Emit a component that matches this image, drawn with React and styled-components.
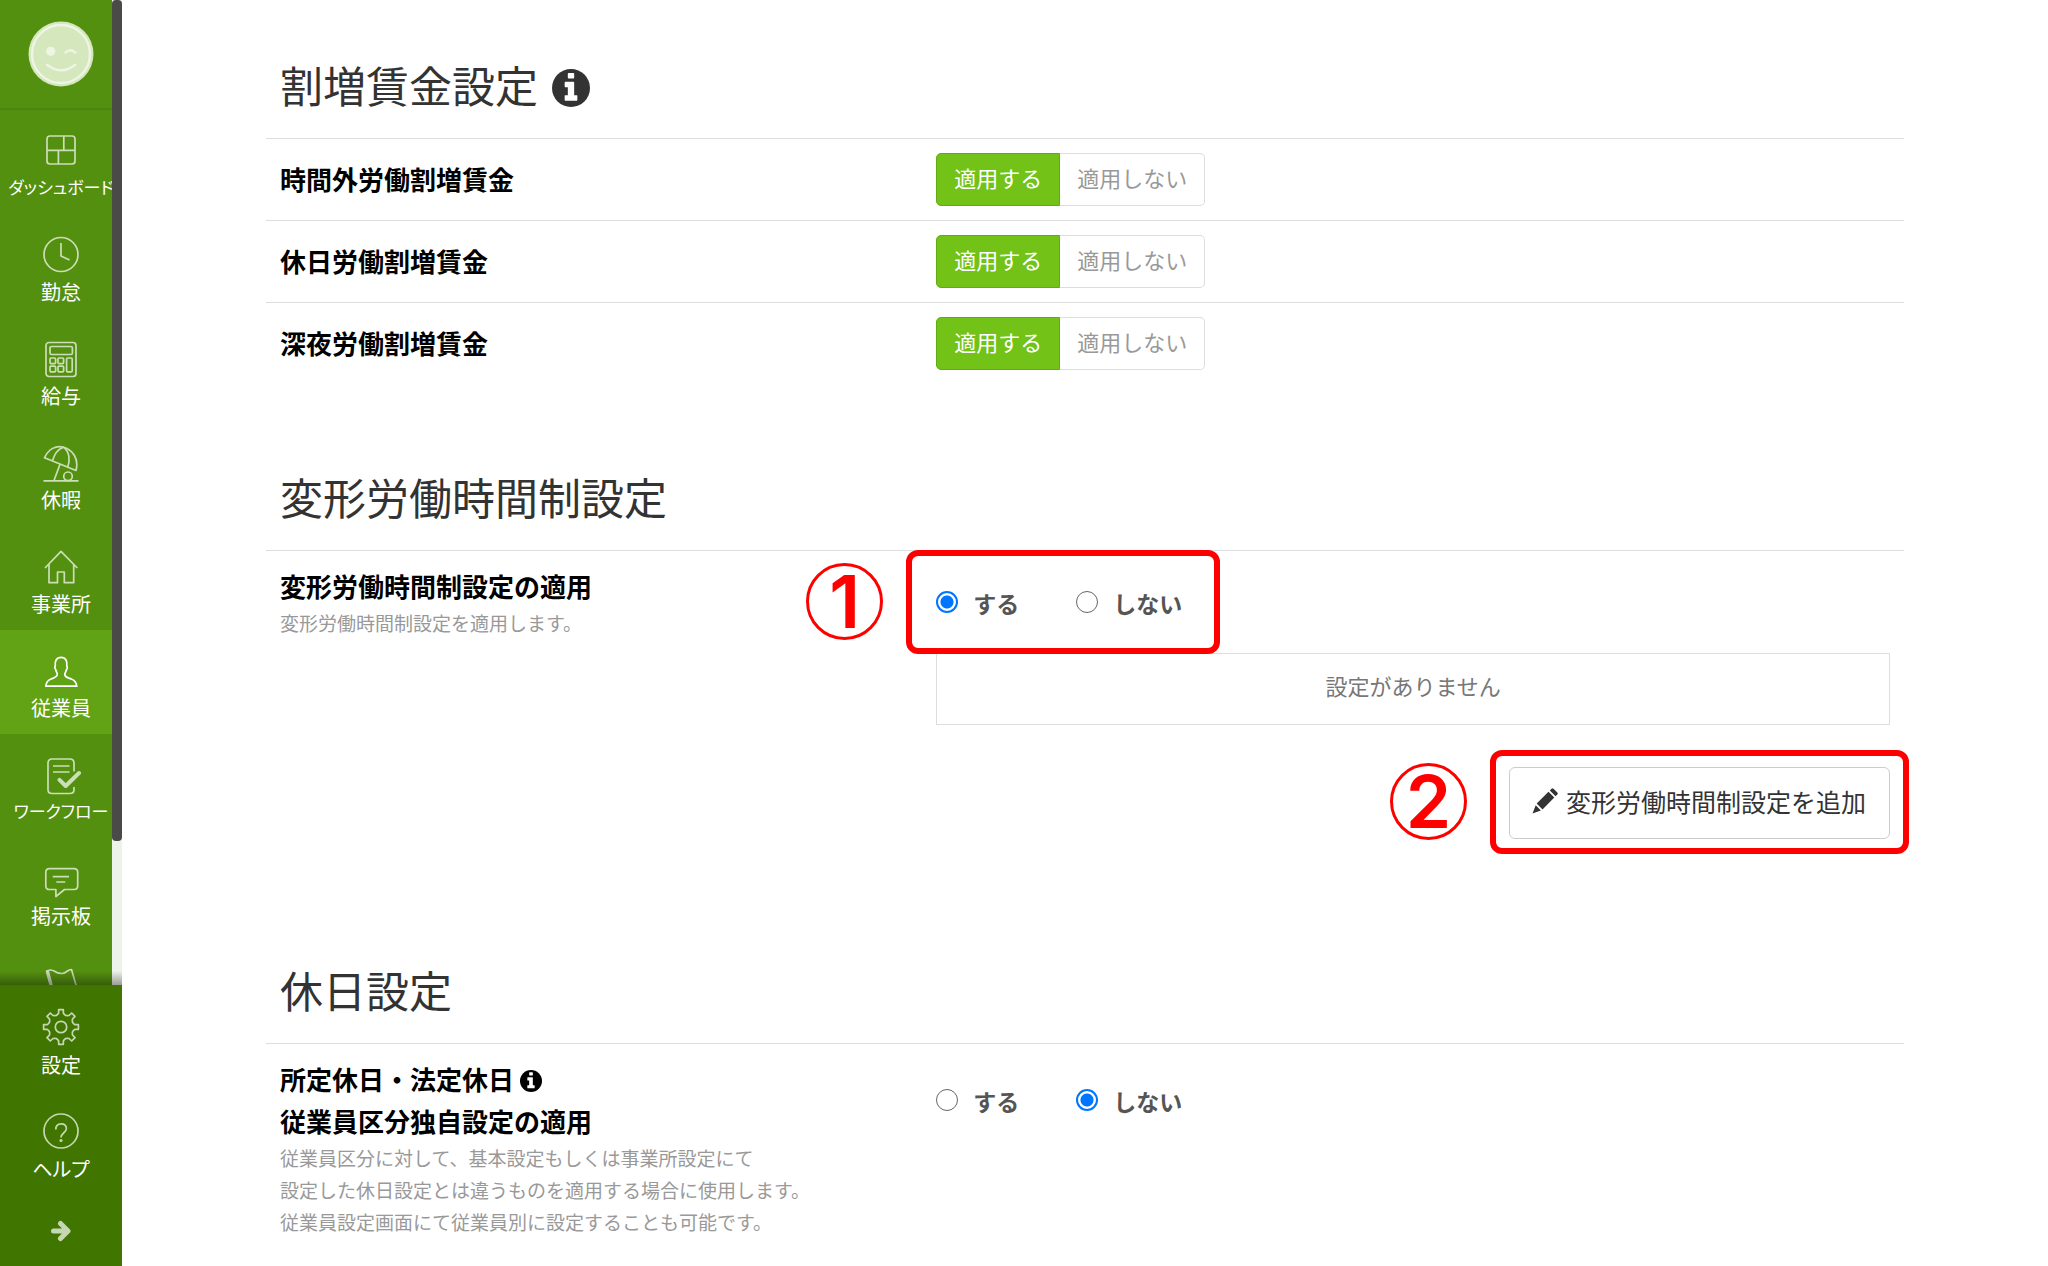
import React, { useState } from 'react';
import styled, { createGlobalStyle } from 'styled-components';

const GlobalStyle = createGlobalStyle`
  *, *::before, *::after {
    box-sizing: border-box;
  }

  body {
    margin: 0;
    background: #fff;
    color: #333;
    font-family: "Liberation Sans", "Noto Sans CJK JP", sans-serif;
  }

  button {
    font-family: inherit;
    cursor: pointer;
  }
`;

/* ---------- layout ---------- */

const Layout = styled.div`
  display: flex;
  min-height: 100vh;
`;

const Main = styled.main`
  flex: 1;
  min-width: 0;
  padding: 56px 144px 0;
`;

/* ---------- sidebar ---------- */

const SidebarWrapper = styled.aside`
  position: sticky;
  top: 0;
  display: flex;
  flex-direction: column;
  flex: none;
  width: 122px;
  height: 100vh;
  background: #54900f;
`;

const ScrollArea = styled.div`
  position: relative;
  flex: 1;
  min-height: 0;
  overflow: hidden;

  &::after {
    content: '';
    position: absolute;
    right: 0;
    bottom: 0;
    left: 0;
    height: 14px;
    background: linear-gradient(rgba(0, 0, 0, 0), rgba(0, 0, 0, 0.35));
  }
`;

const ScrollTrack = styled.div`
  position: absolute;
  top: 0;
  right: 0;
  bottom: 0;
  width: 10px;
  background: #edf3e8;
`;

const ScrollThumb = styled.div`
  height: 841px;
  border-radius: 4px;
  background: #4a4a48;
`;

const Account = styled.a`
  display: flex;
  justify-content: center;
  height: 110px;
  padding-top: 21px;
  border-bottom: 2px solid #4c850d;
`;

const NavList = styled.ul`
  margin: 0;
  padding: 0;
  list-style: none;
`;

const NavLink = styled.a`
  display: flex;
  flex-direction: column;
  align-items: center;
  gap: 9px;
  height: 104px;
  padding-top: 22px;
  background: ${({ $active }) => ($active ? '#62a315' : 'transparent')};
  color: #fff;
  font-size: ${({ $long }) => ($long ? 17 : 20)}px;
  font-feature-settings: "palt";
  line-height: 24px;
  white-space: nowrap;
  text-decoration: none;

  svg {
    flex: none;
    overflow: visible;
    opacity: ${({ $active }) => ($active ? 1 : 0.7)};
  }
`;

const SidebarFooter = styled.div`
  flex: none;
  padding-top: 2px;
  background: #407600;
`;

const ExpandButton = styled.button`
  display: flex;
  align-items: center;
  justify-content: center;
  width: 100%;
  height: 71px;
  padding: 0;
  border: 0;
  background: none;
  color: #c6d8b3;
`;

/* ---------- settings ---------- */

const Section = styled.section`
  margin-bottom: 84px;
`;

const SectionTitle = styled.h2`
  display: flex;
  align-items: center;
  gap: 14px;
  margin: 0;
  padding: 0 14px 18px;
  font-size: 43px;
  font-weight: 400;
  line-height: 64px;
`;

const Row = styled.div`
  display: grid;
  grid-template-columns: 40% 1fr;
  align-items: ${({ $align }) => $align || 'start'};
  padding: 14px 0;
  border-top: 1px solid #ddd;
`;

const RowHead = styled.div`
  padding: 2px 0 0 14px;
`;

const RowBody = styled.div`
  padding: 0 14px 0 15px;
`;

const RowLabel = styled.h3`
  margin: 0;
  color: #000;
  font-size: 26px;
  font-weight: 700;
  line-height: 42px;

  svg {
    margin-left: 6px;
    vertical-align: -2px;
  }
`;

const Description = styled.p`
  margin: 0;
  color: #999;
  font-size: 19px;
  line-height: 32px;
`;

const ToggleGroup = styled.div`
  display: flex;
`;

const ToggleButton = styled.button`
  height: 53px;
  padding: 0 17px;
  border: 1px solid ${({ $on }) => ($on ? '#62ab12' : '#ddd')};
  background: ${({ $on }) => ($on ? '#72c218' : '#fff')};
  color: ${({ $on }) => ($on ? '#fff' : '#999')};
  font-size: 22px;
  line-height: 32px;

  &:first-child {
    border-radius: 5px 0 0 5px;
  }

  &:last-child {
    border-left: 0;
    border-radius: 0 5px 5px 0;
  }
`;

const RadioGroup = styled.div`
  position: relative;
  display: inline-flex;
  align-items: center;
  gap: 57px;
  min-height: ${({ $tall }) => ($tall ? 90 : 80)}px;
`;

const RadioLabel = styled.label`
  display: flex;
  align-items: flex-start;
  gap: 15px;
  color: #555;
  font-size: 23px;
  font-weight: 700;
  line-height: 28px;
  cursor: pointer;
`;

const Radio = styled.input`
  appearance: none;
  flex: none;
  width: 22px;
  height: 22px;
  margin: 0;
  border: 1px solid #666;
  border-radius: 50%;
  background: #fff;

  &:checked {
    border: 2px solid #0075ff;
    background: radial-gradient(#0075ff 0 6px, #fff 7px);
  }
`;

const EmptyBox = styled.div`
  margin-top: 8px;
  padding: 18px 19px 20px;
  border: 1px solid #ddd;
  color: #777;
  font-size: 22px;
  line-height: 32px;
  text-align: center;
`;

const Actions = styled.div`
  display: flex;
  justify-content: flex-end;
  margin: 42px 0 24px;
`;

const ActionSlot = styled.div`
  position: relative;
`;

const AddButton = styled.button`
  display: flex;
  align-items: center;
  gap: 8px;
  height: 72px;
  padding: 0 23px 4px 22px;
  border: 1px solid #ccc;
  border-radius: 6px;
  background: #fff;
  color: #333;
  font-size: 25px;
`;

/* ---------- annotations drawn over the form ---------- */

const Frame = styled.div`
  position: absolute;
  inset: ${({ $inset }) => $inset};
  border: 6px solid #f00;
  border-radius: 12px;
  pointer-events: none;
`;

const StepNumber = styled.span`
  position: absolute;
  top: 50%;
  right: calc(100% + 29px);
  display: flex;
  align-items: center;
  justify-content: center;
  width: 77px;
  height: 77px;
  margin-top: -39px;
  border: 3px solid #f00;
  border-radius: 50%;
  color: #f00;
  font-family: Inter, sans-serif;
  font-size: 73px;
  font-weight: 600;
  line-height: 71px;
`;

/* ---------- icons ---------- */

const LineIcon = ({ children }) => (
  <svg
    width="36"
    height="36"
    viewBox="0 0 36 36"
    fill="none"
    stroke="currentColor"
    strokeWidth="1.7"
    strokeLinejoin="round"
    aria-hidden="true"
  >
    {children}
  </svg>
);

const gearPath = () => {
  const corners = [
    [-22.5, 12.4],
    [-15, 13],
    [-10, 14],
    [-7.5, 17.6],
    [7.5, 17.6],
    [10, 14],
    [15, 13],
  ];
  const points = [];
  for (let tooth = 0; tooth < 8; tooth += 1) {
    corners.forEach(([offset, radius]) => {
      const angle = ((tooth * 45 + offset) * Math.PI) / 180;
      points.push(
        `${(18 + radius * Math.sin(angle)).toFixed(1)} ${(18 - radius * Math.cos(angle)).toFixed(1)}`
      );
    });
  }
  return `M${points.join('L')}z`;
};

const icons = {
  dashboard: (
    <LineIcon>
      <rect x="4" y="4" width="28" height="28" rx="3" />
      <path d="M4 18.3h28M20.8 4v14.3M15.4 18.3V32" />
    </LineIcon>
  ),
  clock: (
    <LineIcon>
      <circle cx="18" cy="18.5" r="17" />
      <path d="M18 7v13l8.5 4" />
    </LineIcon>
  ),
  calculator: (
    <LineIcon>
      <rect x="3" y="2.5" width="30" height="34" rx="3" />
      <rect x="7" y="6.5" width="22.4" height="8" rx="1.5" />
      <rect x="7" y="18" width="5.6" height="5.6" rx="1" />
      <rect x="15" y="18" width="5.6" height="5.6" rx="1" />
      <rect x="7" y="26.2" width="5.6" height="5.6" rx="1" />
      <rect x="15" y="26.2" width="5.6" height="5.6" rx="1" />
      <rect x="23.6" y="18" width="5.6" height="13.8" rx="1" />
    </LineIcon>
  ),
  umbrella: (
    <LineIcon>
      <path d="M1.5 13.8C5.5 5 13 1 20.5 3.2 30 5.8 36 15 33 26.5z" />
      <path d="M9.5 16.6C11.5 9.5 15.5 5 20.5 3.2 26.5 8 27.5 16 24.5 23.5M17 20.3 11 36.5M.5 36.8h35" />
      <circle cx="25" cy="32.3" r="4.3" />
    </LineIcon>
  ),
  house: (
    <LineIcon>
      <path d="M2 20 18 3.3 34.3 20M6 16.5v18.2h8.5V24h6.8v10.7h9.4V16.5" />
    </LineIcon>
  ),
  person: (
    <LineIcon>
      <path d="M2.8 34.2h31c-.4-4-2-6-5.5-7.2-4-1.4-6.5-2-6.5-4.7 0-1.5 1.2-2.3 1.7-4.8.8-.6 1.1-3 .3-3.5.6-4.6-.8-8.6-5.7-8.6s-6.5 4-5.8 8.6c-.8.5-.5 2.9.4 3.5.4 2.5 1.6 3.3 1.6 4.8 0 2.700-2.500 3.300-6.300 4.700-3.400 1.200-4.800 3.200-5.200 7.200z" />
    </LineIcon>
  ),
  workflow: (
    <LineIcon>
      <path d="M31 15.5V7c0-2.600-1.400-4-4-4H9C6.400 3 5 4.400 5 7v26.500c0 2.600 1.400 4 4 4h18c2.600 0 4-1.400 4-4v-2.500M10 10h16.500M10 16h16.500" />
      <path d="m16.5 23.8 6.2 6.2L36 17" strokeWidth="4" strokeLinecap="round" />
    </LineIcon>
  ),
  board: (
    <LineIcon>
      <path d="M6.5 8.7H31c2.500 0 3.700 1.300 3.700 3.700v13.400c0 2.400-1.200 3.700-3.700 3.700h-9.500l-8.600 7v-7H6.500c-2.500 0-3.700-1.300-3.700-3.700V12.400c0-2.400 1.200-3.700 3.700-3.700zM9.700 16.700H26M13.300 22h9" />
    </LineIcon>
  ),
  flag: (
    <LineIcon>
      <path d="m4.3 7 8 30" strokeWidth="3.4" />
      <path d="M3 7.500c3-2 6-2 9 0s8 3 11 .5c2-1.500 3-2.500 5.500-2.500l5.500 19" />
    </LineIcon>
  ),
  gear: (
    <LineIcon>
      <path d={gearPath()} />
      <circle cx="18" cy="18" r="5.7" />
    </LineIcon>
  ),
  help: (
    <LineIcon>
      <circle cx="18" cy="18" r="17" />
      <path d="M12.8 16.5c0-3.500 2-5.700 5.300-5.700s5.300 2 5.300 4.800c0 4-5.400 4.400-5.400 9" />
      <circle cx="18" cy="27.5" r="1.6" fill="currentColor" stroke="none" />
    </LineIcon>
  ),
};

const SmileIcon = () => (
  <svg width="66" height="66" viewBox="0 0 66 66" fill="none" stroke="#eef5e5" aria-hidden="true">
    <circle cx="33" cy="33" r="32.5" fill="#d5e7bd" stroke="none" />
    <circle cx="33" cy="33" r="29" strokeWidth="2.4" />
    <circle cx="22.7" cy="30.3" r="4.6" fill="#eef5e5" stroke="none" />
    <path d="M37.5 31.5q4.8-4.5 9.8 0M19 43.7q14 11 28.3 0" strokeWidth="2.4" strokeLinecap="round" />
  </svg>
);

const InfoIcon = ({ size }) => (
  <svg width={size} height={size} viewBox="128 128 1536 1536" role="img" aria-label="情報">
    <circle cx="896" cy="896" r="768" fill="currentColor" />
    <path
      fill="#fff"
      d="M1152 1376v-160q0-14-9-23t-23-9h-96V672q0-14-9-23t-23-9H672q-14 0-23 9t-9 23v160q0 14 9 23t23 9h96v320h-96q-14 0-23 9t-9 23v160q0 14 9 23t23 9h448q14 0 23-9t9-23zM1024 480V320q0-14-9-23t-23-9H800q-14 0-23 9t-9 23v160q0 14 9 23t23 9h192q14 0 23-9t9-23z"
    />
  </svg>
);

const PencilIcon = () => (
  <svg width="26" height="26" viewBox="0 0 26 26" fill="currentColor" aria-hidden="true">
    <path d="M19.5.8q1-1 2 0l3.800 3.800q1 1 0 2l-1.700 1.700-5.800-5.800zM16.500 3.800l5.800 5.800L10.500 21.400l-5.800-5.800zM3.700 17.200l5.200 5.200L.5 25.500z" />
  </svg>
);

const ArrowIcon = () => (
  <svg
    width="20"
    height="22"
    viewBox="0 0 20 22"
    fill="none"
    stroke="currentColor"
    strokeWidth="5"
    strokeLinecap="round"
    strokeLinejoin="round"
    aria-hidden="true"
  >
    <path d="M2.5 11H16M9.5 3.5 17 11l-7.5 7.5" />
  </svg>
);

/* ---------- components ---------- */

const mainNav = [
  { icon: 'dashboard', label: 'ダッシュボード', long: true },
  { icon: 'clock', label: '勤怠' },
  { icon: 'calculator', label: '給与' },
  { icon: 'umbrella', label: '休暇' },
  { icon: 'house', label: '事業所' },
  { icon: 'person', label: '従業員', active: true },
  { icon: 'workflow', label: 'ワークフロー', long: true },
  { icon: 'board', label: '掲示板' },
  { icon: 'flag' },
];

const footerNav = [
  { icon: 'gear', label: '設定' },
  { icon: 'help', label: 'ヘルプ' },
];

const premiums = ['時間外労働割増賃金', '休日労働割増賃金', '深夜労働割増賃金'];

function Nav({ items }) {
  return (
    <NavList>
      {items.map(({ icon, label, active, long }) => (
        <li key={icon}>
          <NavLink href="#" $active={active} $long={long}>
            {icons[icon]}
            {label}
          </NavLink>
        </li>
      ))}
    </NavList>
  );
}

function Sidebar() {
  return (
    <SidebarWrapper>
      <ScrollArea>
        <Account href="#" aria-label="アカウント">
          <SmileIcon />
        </Account>
        <Nav items={mainNav} />
        <ScrollTrack>
          <ScrollThumb />
        </ScrollTrack>
      </ScrollArea>
      <SidebarFooter>
        <Nav items={footerNav} />
        <ExpandButton type="button" aria-label="メニューを開く">
          <ArrowIcon />
        </ExpandButton>
      </SidebarFooter>
    </SidebarWrapper>
  );
}

function PremiumRow({ label }) {
  const [applied, setApplied] = useState(true);

  return (
    <Row $align="center">
      <RowHead>
        <RowLabel>{label}</RowLabel>
      </RowHead>
      <RowBody>
        <ToggleGroup role="group" aria-label={label}>
          <ToggleButton type="button" $on={applied} aria-pressed={applied} onClick={() => setApplied(true)}>
            適用する
          </ToggleButton>
          <ToggleButton type="button" $on={!applied} aria-pressed={!applied} onClick={() => setApplied(false)}>
            適用しない
          </ToggleButton>
        </ToggleGroup>
      </RowBody>
    </Row>
  );
}

function YesNo({ name, label, initial, tall, children }) {
  const [value, setValue] = useState(initial);

  return (
    <RadioGroup role="radiogroup" aria-label={label} $tall={tall}>
      {['する', 'しない'].map((option) => (
        <RadioLabel key={option}>
          <Radio type="radio" name={name} checked={value === option} onChange={() => setValue(option)} />
          {option}
        </RadioLabel>
      ))}
      {children}
    </RadioGroup>
  );
}

function App() {
  return (
    <Layout>
      <GlobalStyle />
      <Sidebar />
      <Main>
        <Section>
          <SectionTitle>
            割増賃金設定
            <InfoIcon size={38} />
          </SectionTitle>
          {premiums.map((label) => (
            <PremiumRow key={label} label={label} />
          ))}
        </Section>

        <Section>
          <SectionTitle>変形労働時間制設定</SectionTitle>
          <Row>
            <RowHead>
              <RowLabel>変形労働時間制設定の適用</RowLabel>
              <Description>変形労働時間制設定を適用します。</Description>
            </RowHead>
            <RowBody>
              <YesNo name="variable" label="変形労働時間制設定の適用" initial="する">
                <Frame $inset="-15px -38px -9px -30px">
                  <StepNumber>1</StepNumber>
                </Frame>
              </YesNo>
              <EmptyBox>設定がありません</EmptyBox>
              <Actions>
                <ActionSlot>
                  <AddButton type="button">
                    <PencilIcon />
                    変形労働時間制設定を追加
                  </AddButton>
                  <Frame $inset="-17px -19px -15px">
                    <StepNumber>2</StepNumber>
                  </Frame>
                </ActionSlot>
              </Actions>
            </RowBody>
          </Row>
        </Section>

        <section>
          <SectionTitle>休日設定</SectionTitle>
          <Row>
            <RowHead>
              <RowLabel>
                所定休日・法定休日
                <InfoIcon size={22} />
                <br />
                従業員区分独自設定の適用
              </RowLabel>
              <Description>
                従業員区分に対して、基本設定もしくは事業所設定にて
                <br />
                設定した休日設定とは違うものを適用する場合に使用します。
                <br />
                従業員設定画面にて従業員別に設定することも可能です。
              </Description>
            </RowHead>
            <RowBody>
              <YesNo name="holiday" label="従業員区分独自設定の適用" initial="しない" tall />
            </RowBody>
          </Row>
        </section>
      </Main>
    </Layout>
  );
}

export default App;
